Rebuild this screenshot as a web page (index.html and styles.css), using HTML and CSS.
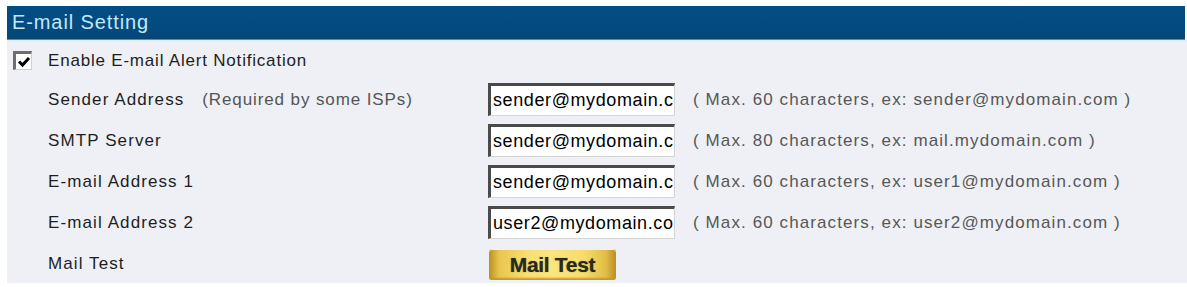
FILE: index.html
```html
<!DOCTYPE html>
<html>
<head>
<meta charset="utf-8">
<link rel="stylesheet" href="styles.css">
</head>
<body>
<div class="panel">
  <div class="header">E-mail Setting</div>
  <div class="body">
    <label class="enable">
      <span class="check"><svg width="14" height="12" viewBox="0 0 14 12"><path d="M2 5.5 L5.5 9 L12 2" fill="none" stroke="#000" stroke-width="3"/></svg></span>
      <span>Enable E-mail Alert Notification</span>
    </label>
    <div class="grid">
      <div class="label">Sender Address <span class="note">(Required by some ISPs)</span></div>
      <div class="field"><input class="input" type="text" value="sender@mydomain.com"></div>
      <div class="hint">( Max. 60 characters, ex: sender@mydomain.com )</div>

      <div class="label">SMTP Server</div>
      <div class="field"><input class="input" type="text" value="sender@mydomain.com"></div>
      <div class="hint">( Max. 80 characters, ex: mail.mydomain.com )</div>

      <div class="label">E-mail Address 1</div>
      <div class="field"><input class="input" type="text" value="sender@mydomain.com"></div>
      <div class="hint">( Max. 60 characters, ex: user1@mydomain.com )</div>

      <div class="label">E-mail Address 2</div>
      <div class="field"><input class="input" type="text" value="user2@mydomain.com"></div>
      <div class="hint">( Max. 60 characters, ex: user2@mydomain.com )</div>

      <div class="label">Mail Test</div>
      <div class="field"><button class="button" type="button">Mail Test</button></div>
      <div class="hint"></div>
    </div>
  </div>
</div>
</body>
</html>
```
FILE: styles.css
```css
html, body {
  margin: 0;
  padding: 0;
  background: #ffffff;
}
body {
  font-family: "Liberation Sans", Arial, sans-serif;
  color: #1e1e1e;
}
.panel {
  margin: 6px 0 0 7px;
  width: 1180px;
}
.header {
  height: 34px;
  width: 1178px;
  background: linear-gradient(#034d85, #04497e 80%, #0a4472);
  color: #c3e8f7;
  font-size: 20px;
  letter-spacing: 0.9px;
  line-height: 32px;
  padding-left: 5px;
  box-sizing: border-box;
  border-bottom: 1px solid #5b8caf;
}
.body {
  background: #eef0f5;
  border-top: 2px solid #dbf0fa;
  height: 243px;
  box-sizing: border-box;
}
.enable {
  display: flex;
  align-items: center;
  height: 37px;
  padding-left: 6px;
  font-size: 17px;
  letter-spacing: 0.8px;
}
.check {
  width: 19px;
  height: 19px;
  box-sizing: border-box;
  border-top: 3px solid #6e6e6e;
  border-left: 3px solid #6e6e6e;
  border-right: 1px solid #cfcfcf;
  border-bottom: 1px solid #cfcfcf;
  background: #fff;
  display: flex;
  align-items: center;
  justify-content: center;
  margin-right: 16px;
  letter-spacing: 0;
}
.check svg { display: block; }
.grid {
  display: grid;
  grid-template-columns: 440px 205px auto;
  grid-auto-rows: 41px;
  padding-left: 41px;
  align-items: center;
}
.label {
  font-size: 17px;
  letter-spacing: 1.1px;
  color: #1e1e1e;
  white-space: nowrap;
}
.note {
  color: #555;
  margin-left: 12px;
  letter-spacing: 0.9px;
}
.field {
  display: flex;
  align-items: center;
}
.input {
  display: block;
  width: 187px;
  height: 33px;
  margin: 0;
  box-sizing: border-box;
  background: #fff;
  border-style: solid;
  border-width: 3px 1px 1px 3px;
  border-color: #4a4a4a #d4d4d4 #d4d4d4 #4a4a4a;
  font-family: "Liberation Sans", Arial, sans-serif;
  font-size: 18px;
  letter-spacing: 0.6px;
  padding: 0 0 0 2px;
  color: #000;
  outline: none;
}
.hint {
  font-size: 17px;
  letter-spacing: 1.1px;
  color: #575757;
  white-space: nowrap;
}
.button {
  display: block;
  width: 127px;
  height: 31px;
  margin: 2px 0 0 1px;
  padding: 0;
  border: none;
  box-sizing: border-box;
  border-radius: 3px;
  background: linear-gradient(90deg, #b98f22 0%, #e9c64e 8%, #f8df72 30%, #fbe57e 50%, #f6dc6c 75%, #e3bd45 92%, #b88e22 100%);
  box-shadow: inset 0 1px 0 #fff3b5, inset 0 -2px 2px #c39828;
  color: #2a2a1a;
  font-family: "Liberation Sans", Arial, sans-serif;
  font-weight: bold;
  font-size: 21px;
  line-height: 31px;
  text-align: center;
  letter-spacing: -0.3px;
  text-shadow: 0 0 1px #6b6a40;
}
```
